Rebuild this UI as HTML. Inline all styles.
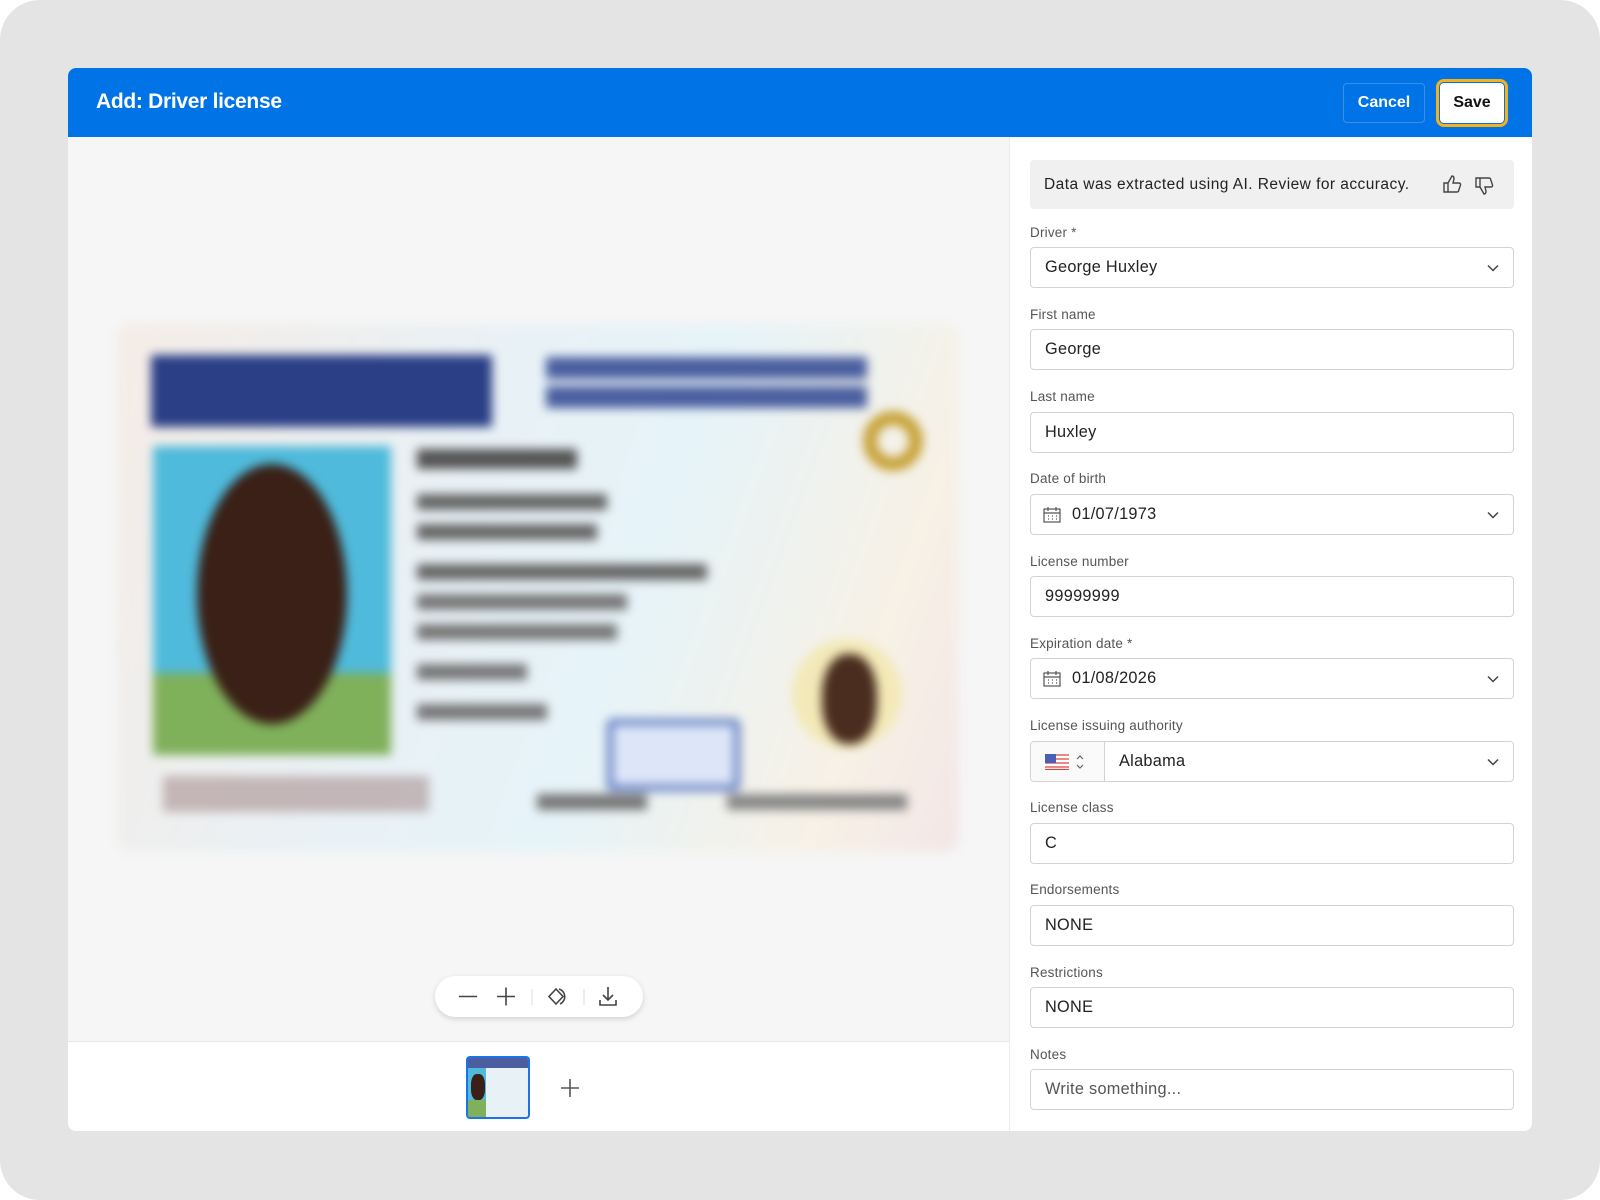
<!DOCTYPE html>
<html><head><meta charset="utf-8"><style>
*{box-sizing:border-box;margin:0;padding:0}
body{width:1600px;height:1200px;background:#fff;font-family:"Liberation Sans",sans-serif;position:relative;overflow:hidden}
.bg{position:absolute;left:0;top:0;width:1600px;height:1200px;background:#e4e4e4;border-radius:40px}
.card{position:absolute;left:68px;top:68px;width:1464px;height:1063px;background:#fff;border-radius:8px;overflow:hidden}
.hdr{position:absolute;left:0;top:0;width:1464px;height:69px;background:#0073e6}
.title{position:absolute;left:28px;top:22px;color:#fff;font-weight:bold;font-size:21px;letter-spacing:-0.3px}
.cancel{position:absolute;left:1275px;top:15px;width:82px;height:40px;border:1px solid #3b8fe8;border-radius:4px;color:#fff;font-weight:bold;font-size:16px;text-align:center;line-height:38px}
.save{position:absolute;left:1368px;top:11px;width:72px;height:48px;border:3px solid #f6b21b;border-radius:8px;padding:1px}
.save div{width:100%;height:100%;background:#fff;border-radius:4px;font-weight:bold;font-size:16px;text-align:center;line-height:40px;color:#111}
.left{position:absolute;left:0;top:69px;width:941px;height:904px;background:#f6f6f6}
.bottom{position:absolute;left:0;top:973px;width:941px;height:90px;background:#fff;border-top:1px solid #e8e8e8}
.right{position:absolute;left:941px;top:69px;width:523px;height:994px;border-left:1px solid #ececec;background:#fff}
.info{position:absolute;left:20px;top:23px;width:484px;height:49px;background:#f0f0f0;border-radius:4px;font-size:15.5px;color:#222;padding:16px 14px;letter-spacing:0.45px}
.lbl{position:absolute;left:20px;font-size:13.5px;color:#555;letter-spacing:0.2px}
.inp{position:absolute;left:20px;width:484px;height:41px;border:1px solid #d3d3d3;border-radius:4px;font-size:16.3px;color:#222;padding:0 14px;line-height:39px;letter-spacing:0.3px}
.chev{position:absolute;right:14px;top:14px}
.tool{position:absolute;left:367px;top:839px;width:208px;height:41px;background:#fff;border-radius:21px;box-shadow:0 2px 6px rgba(0,0,0,.15)}
.id{position:absolute;left:49px;top:187px;width:842px;height:528px;filter:blur(5px);background:linear-gradient(110deg,#f5ece6,#e8f1f6 40%,#e6f3f8 60%,#f7f1e6 85%,#f3e6e6);border-radius:14px}
.id div{position:absolute}
</style></head><body>
<div class="bg"></div>
<div class="card">
 <div class="hdr">
  <div class="title">Add: Driver license</div>
  <div class="cancel">Cancel</div>
  <div class="save"><div>Save</div></div>
 </div>
 <div class="left">
  <div class="id">
   <div style="left:34px;top:31px;width:341px;height:72px;background:#2a3f86"></div>
   <div style="left:429px;top:33px;width:321px;height:22px;background:#4b5fa0"></div>
   <div style="left:429px;top:62px;width:321px;height:22px;background:#4b5fa0"></div>
   <div style="left:36px;top:122px;width:238px;height:227px;background:#4fbadb"></div>
   <div style="left:36px;top:349px;width:238px;height:82px;background:#7fb05a"></div>
   <div style="left:80px;top:140px;width:150px;height:260px;background:#3a2016;border-radius:50%"></div>
   <div style="left:300px;top:125px;width:160px;height:20px;background:#555"></div>
   <div style="left:300px;top:170px;width:190px;height:16px;background:#666"></div>
   <div style="left:300px;top:200px;width:180px;height:16px;background:#666"></div>
   <div style="left:300px;top:240px;width:290px;height:16px;background:#666"></div>
   <div style="left:300px;top:270px;width:210px;height:16px;background:#777"></div>
   <div style="left:300px;top:300px;width:200px;height:16px;background:#777"></div>
   <div style="left:300px;top:340px;width:110px;height:16px;background:#777"></div>
   <div style="left:300px;top:380px;width:130px;height:16px;background:#777"></div>
   <div style="left:746px;top:87px;width:60px;height:60px;border:14px solid #c8a33a;border-radius:50%"></div>
   <div style="left:675px;top:315px;width:110px;height:110px;background:#f3e9b8;border-radius:50%"></div>
   <div style="left:705px;top:330px;width:55px;height:90px;background:#4a2d1e;border-radius:45%"></div>
   <div style="left:490px;top:395px;width:133px;height:72px;border:6px solid #5a76c0;border-radius:6px;background:#dde6f8"></div>
   <div style="left:46px;top:452px;width:266px;height:36px;background:#a89090;opacity:.6"></div>
   <div style="left:420px;top:470px;width:110px;height:16px;background:#777"></div>
   <div style="left:610px;top:470px;width:180px;height:16px;background:#888"></div>
  </div>
  <div class="tool">
   <svg width="208" height="41" fill="none" stroke="#444" stroke-width="1.6">
    <path d="M24 20.5h18"/><path d="M62 20.5h18M71 11.5v18"/>
    <path d="M97 13v16" stroke="#ddd" stroke-width="1"/>
    <path d="M121 13l-7 7.5 7 7.5 7-7.5z"/><path d="M124 13a8 8 0 0 1 1 15"/>
    <path d="M149 13v16" stroke="#ddd" stroke-width="1"/>
    <path d="M173 11v13M168 19l5 5 5-5M165 24v5h16v-5"/>
   </svg>
  </div>
 </div>
 <div class="bottom">
  <div style="position:absolute;left:398px;top:14px;width:64px;height:63px;border:2px solid #1a73e8;border-radius:4px;background:linear-gradient(90deg,#4fbadb 30%,#e8f1f6 30%);overflow:hidden">
   <div style="position:absolute;left:0;top:0;width:60px;height:10px;background:#4b5fa0"></div>
   <div style="position:absolute;left:3px;top:16px;width:14px;height:26px;background:#3a2016;border-radius:40%"></div>
   <div style="position:absolute;left:0;top:42px;width:18px;height:20px;background:#7fb05a"></div>
  </div>
  <svg style="position:absolute;left:492px;top:36px" width="20" height="20" stroke="#555" stroke-width="1.6"><path d="M1 10h18M10 1v18"/></svg>
 </div>
 <div class="right">
  <div class="info">Data was extracted using AI. Review for accuracy.
   <svg style="position:absolute;left:412px;top:14px" width="20" height="20" fill="none" stroke="#444" stroke-width="1.4"><path d="M2 9h4v9H2zM6 9l4-7c2 0 2 2 2 3l-1 4h6c1 0 2 1 1.5 2l-2 6c0 1-1 1-2 1H6"/></svg>
   <svg style="position:absolute;left:444px;top:16px" width="20" height="20" fill="none" stroke="#444" stroke-width="1.4"><path d="M2 2h4v9H2zM6 11l4 7c2 0 2-2 2-3l-1-4h6c1 0 2-1 1.5-2l-2-6c0-1-1-1-2-1H6"/></svg>
  </div>
  <div class="lbl" style="top:88px">Driver *</div>
  <div class="inp" style="top:110px">George Huxley<svg class="chev" width="12" height="12" fill="none" stroke="#444" stroke-width="1.5"><path d="M1 3.5l5 5 5-5"/></svg></div>
  <div class="lbl" style="top:170px">First name</div>
  <div class="inp" style="top:192px">George</div>
  <div class="lbl" style="top:252px">Last name</div>
  <div class="inp" style="top:275px">Huxley</div>
  <div class="lbl" style="top:334px">Date of birth</div>
  <div class="inp" style="top:357px;padding-left:41px"><svg style="position:absolute;left:12px;top:11px" width="18" height="17" fill="none" stroke="#555" stroke-width="1.2"><rect x="1" y="3" width="16" height="13"/><path d="M1 7h16M5 1v4M13 1v4M5 10h1M9 10h1M13 10h1M5 13h1M9 13h1M13 13h1"/></svg>01/07/1973<svg class="chev" width="12" height="12" fill="none" stroke="#444" stroke-width="1.5"><path d="M1 3.5l5 5 5-5"/></svg></div>
  <div class="lbl" style="top:417px">License number</div>
  <div class="inp" style="top:439px">99999999</div>
  <div class="lbl" style="top:499px">Expiration date *</div>
  <div class="inp" style="top:521px;padding-left:41px"><svg style="position:absolute;left:12px;top:11px" width="18" height="17" fill="none" stroke="#555" stroke-width="1.2"><rect x="1" y="3" width="16" height="13"/><path d="M1 7h16M5 1v4M13 1v4M5 10h1M9 10h1M13 10h1M5 13h1M9 13h1M13 13h1"/></svg>01/08/2026<svg class="chev" width="12" height="12" fill="none" stroke="#444" stroke-width="1.5"><path d="M1 3.5l5 5 5-5"/></svg></div>
  <div class="lbl" style="top:581px">License issuing authority</div>
  <div class="inp" style="top:604px;padding-left:88px">
   <div style="position:absolute;left:0;top:0;width:74px;height:39px;background:#fafafa;border-right:1px solid #d3d3d3;border-radius:4px 0 0 4px"></div>
   <svg style="position:absolute;left:14px;top:12px" width="24" height="16"><rect width="24" height="16" fill="#fff"/><path d="M0 1h24M0 5h24M0 9h24M0 13h24M0 15.5h24" stroke="#e0403a" stroke-width="1.3"/><rect width="11" height="9" fill="#4a5fb8"/></svg>
   <svg style="position:absolute;left:44px;top:12px" width="10" height="16" fill="none" stroke="#666" stroke-width="1.2"><path d="M2 5l3-3 3 3M2 11l3 3 3-3"/></svg>
   Alabama<svg class="chev" width="12" height="12" fill="none" stroke="#444" stroke-width="1.5"><path d="M1 3.5l5 5 5-5"/></svg></div>
  <div class="lbl" style="top:663px">License class</div>
  <div class="inp" style="top:686px">C</div>
  <div class="lbl" style="top:745px">Endorsements</div>
  <div class="inp" style="top:768px">NONE</div>
  <div class="lbl" style="top:828px">Restrictions</div>
  <div class="inp" style="top:850px">NONE</div>
  <div class="lbl" style="top:910px">Notes</div>
  <div class="inp" style="top:932px;color:#555">Write something...</div>
 </div>
</div>
</body></html>
